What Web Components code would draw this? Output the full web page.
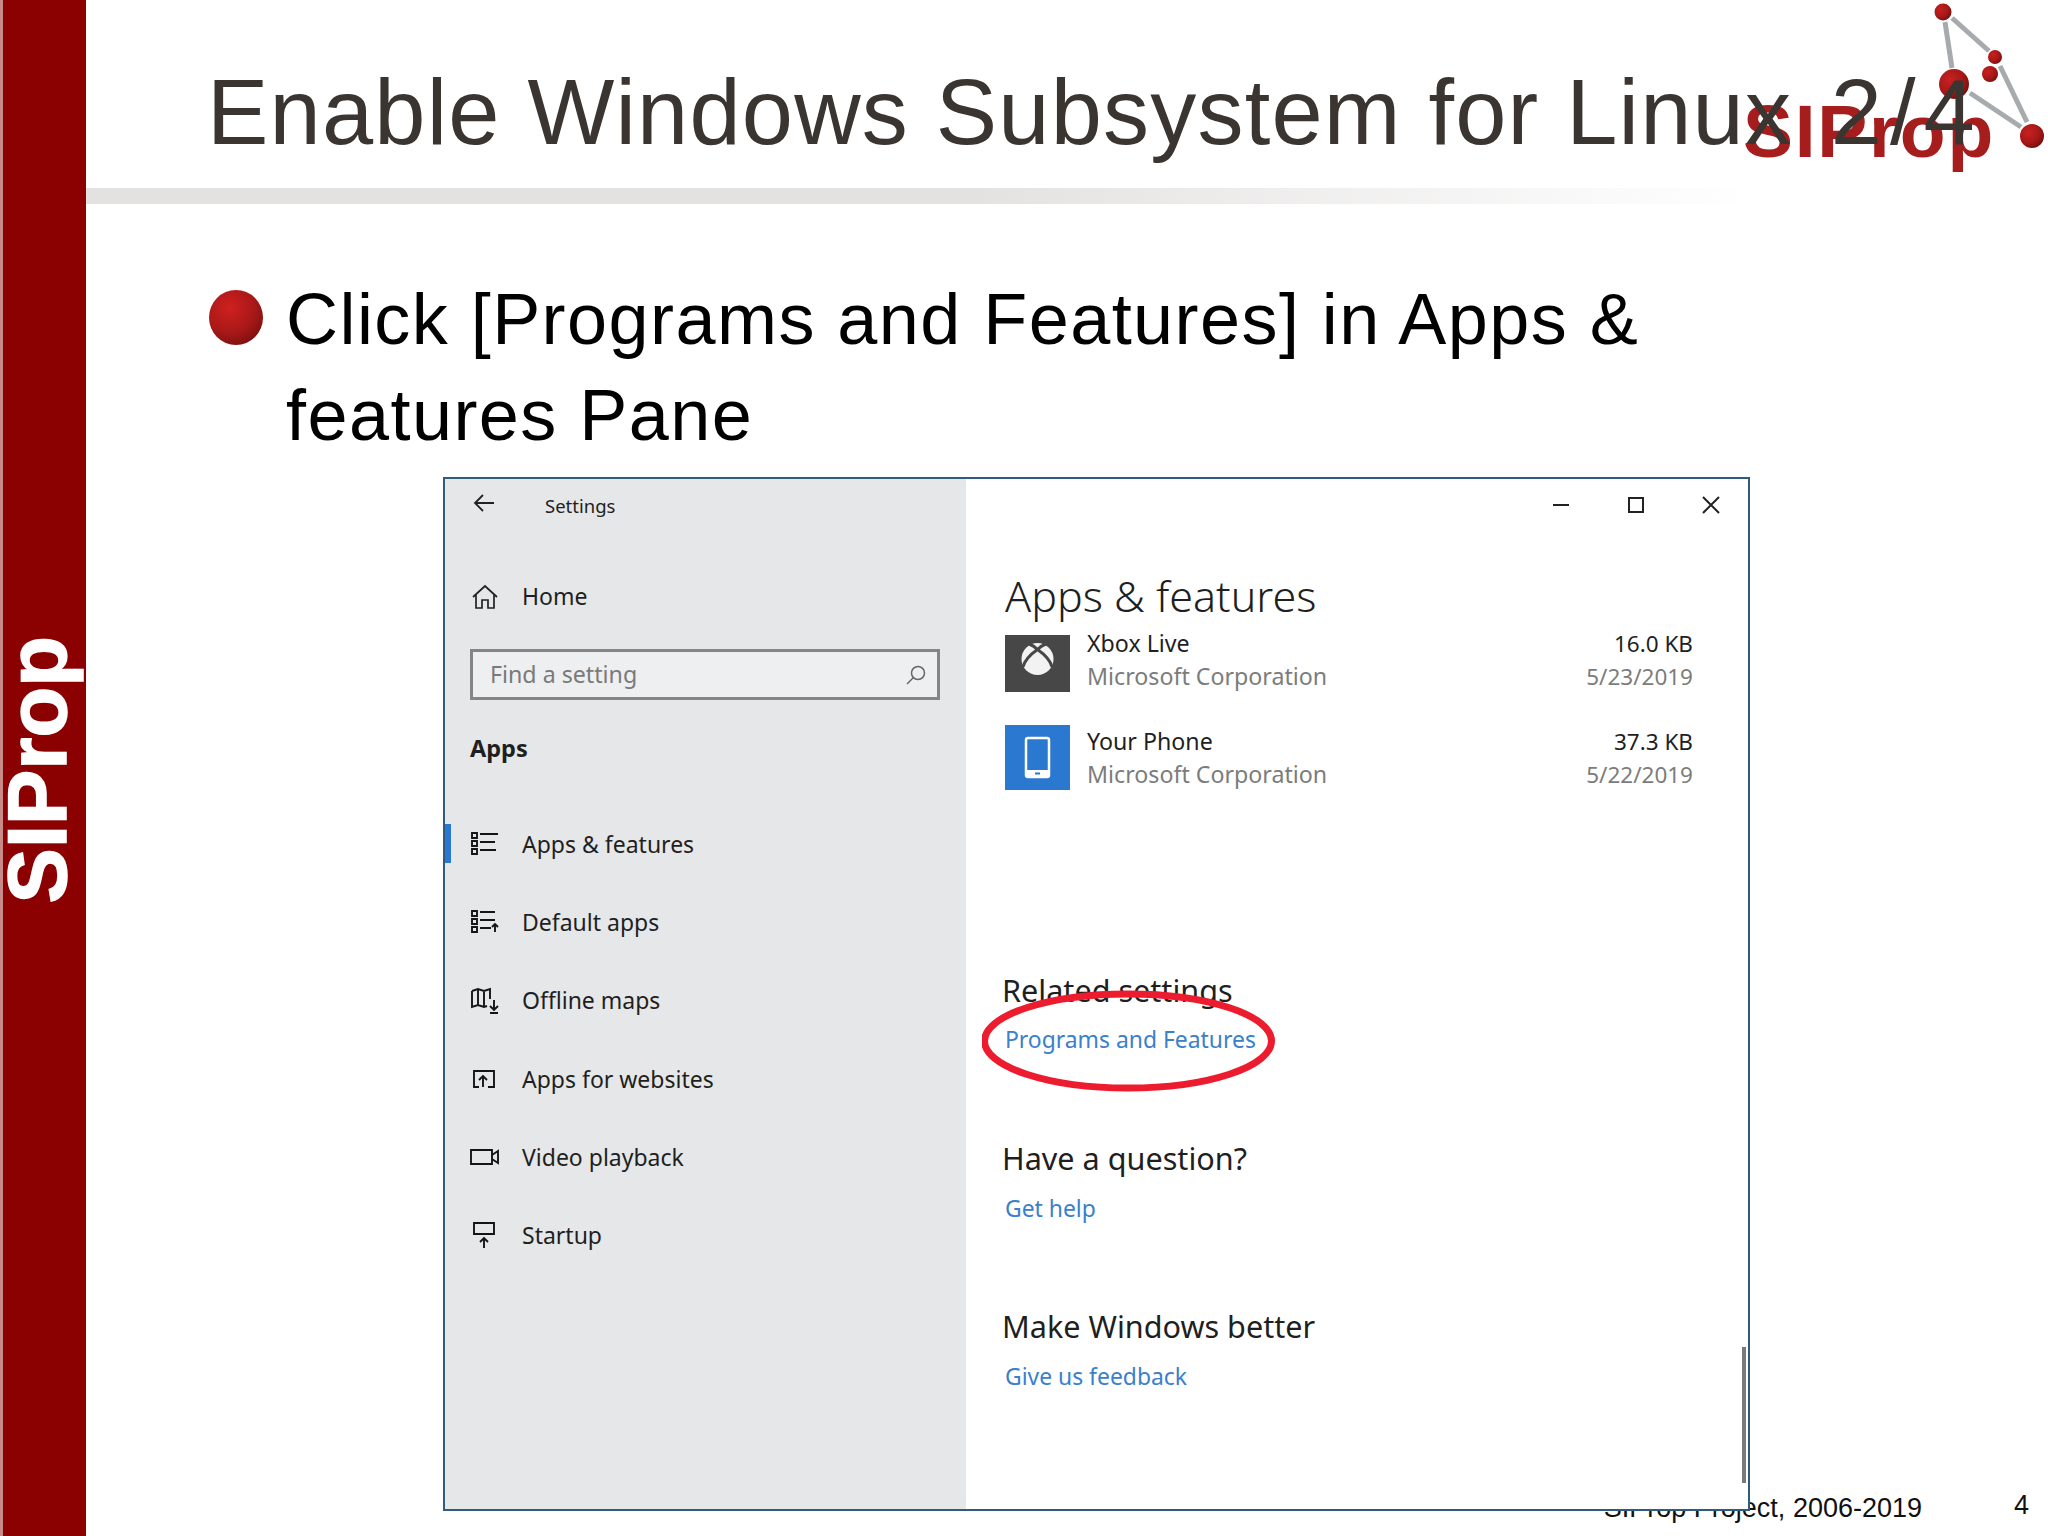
<!DOCTYPE html>
<html lang="en">
<head>
<meta charset="utf-8">
<title>Enable Windows Subsystem for Linux 2/4</title>
<style>
  html, body { margin: 0; padding: 0; background: #fff; }
</style>
</head>
<body>
<slide-page>
  <slide-title>Enable Windows Subsystem for Linux <span style="letter-spacing:8px;margin-left:12px">2/4</span></slide-title>
  <slide-bullet>Click [Programs and Features] in Apps &amp; features Pane</slide-bullet>
  <settings-window></settings-window>
  <slide-footer></slide-footer>
</slide-page>

<template id="slide-page-template">
  <style>
    :host { display: grid; grid-template-columns: 86px 1fr; width: 2048px; height: 1536px; overflow: hidden; background: #fff; position: relative; }
    .band { background: #8b0000; border-left: 3px solid #c98a8a; box-sizing: border-box; display: flex; flex-direction: column; justify-content: flex-end; align-items: flex-start; padding-bottom: 633px; }
    .band span { writing-mode: vertical-rl; transform: rotate(180deg); font: bold 83px/70px "Liberation Sans", sans-serif; -webkit-text-stroke: 1.5px #fff; color: #fff; white-space: nowrap; }
    main { display: flex; flex-direction: column; min-width: 0; }
    svg.logo { position: absolute; left: 1700px; top: 0; width: 348px; height: 200px; }
    svg.logo text { font: bold 75px "Liberation Sans", sans-serif; letter-spacing: 1.7px; fill: #a61d1d; }
  </style>
  <div class="band"><span>SIProp</span></div>
  <svg class="logo" viewBox="0 0 348 200">
    <defs>
      <radialGradient id="ball" cx="0.35" cy="0.35" r="0.75">
        <stop offset="0" stop-color="#c8201f"/><stop offset="0.6" stop-color="#a51818"/><stop offset="1" stop-color="#6e0d0d"/>
      </radialGradient>
    </defs>
    <g stroke="#a8abae" stroke-width="5" fill="none">
      <path d="M245 22 L252 68"/><path d="M252 18 L289 51"/><path d="M300 66 L327 122"/><path d="M270 93 L321 127"/>
    </g>
    <circle cx="243" cy="12" r="8.5" fill="url(#ball)"/>
    <circle cx="295" cy="57" r="7" fill="url(#ball)"/>
    <circle cx="290" cy="74" r="8" fill="url(#ball)"/>
    <circle cx="254" cy="84" r="15" fill="url(#ball)"/>
    <circle cx="332" cy="136" r="12" fill="url(#ball)"/>
    <text x="43" y="157">SIProp</text>
  </svg>
  <main><slot></slot></main>
</template>

<template id="slide-title-template">
  <style>
    :host { display: block; position: relative; }
    h1 { margin: 0; height: 188px; box-sizing: border-box; padding: 66px 0 0 121px; font: 400 92px/1 "Liberation Sans", sans-serif; letter-spacing: 1.2px; color: #3b3532; white-space: nowrap; }
    .rule { height: 16px; background: linear-gradient(90deg, #e4e2e1 0, #e4e2e1 45%, #fff 85%); }
  </style>
  <h1><slot></slot></h1>
  <div class="rule"></div>
</template>

<template id="slide-bullet-template">
  <style>
    :host { display: grid; grid-template-columns: 53px 1fr; column-gap: 24px; padding: 66.5px 0 0 123px; height: 273px; box-sizing: border-box; position: relative; }
    .ball { width: 54px; height: 55px; margin-top: 19.5px; border-radius: 50%; background: radial-gradient(circle at 38% 32%, #d0201f 0, #a81818 50%, #5f0b0b 100%); }
    p { margin: 0; width: 1420px; font: 400 72px/96px "Liberation Sans", sans-serif; letter-spacing: 1.45px; color: #000; }
  </style>
  <div class="ball"></div>
  <p><slot></slot></p>
</template>

<template id="nav-item-template">
  <style>
    :host { display: grid; grid-template-columns: 30px 1fr; column-gap: 23px; align-items: center; height: 78.2px; padding-left: 24px; font: 400 23px "Noto Sans", sans-serif; color: #1f1f1f; position: relative; white-space: nowrap; }
    :host([active])::before { content: ""; position: absolute; left: 0; top: 19px; width: 6px; height: 39px; background: #2b78d0; }
    ::slotted(svg) { width: 30px; height: 30px; fill: none; stroke: #151515; stroke-width: 1.9; }
  </style>
  <slot name="icon"></slot>
  <span><slot></slot></span>
</template>

<template id="app-row-template">
  <style>
    :host { display: grid; grid-template-columns: 65px 1fr auto; column-gap: 17px; align-items: center; height: 66px; font: 400 23.2px/33px "Noto Sans", sans-serif; color: #1f1f1f; margin-right: 55px; }
    .tile { width: 65px; height: 65px; align-self: end; display: flex; margin-bottom: 1.5px; }
    :host([short]) .tile { height: 57px; margin-bottom: 1px; }
    .sub { color: #7c7c7c; }
    .size { text-align: right; font-size: 22.5px; }
    ::slotted(svg) { width: 65px; height: 100%; display: block; }
  </style>
  <div class="tile"><slot name="tile"></slot></div>
  <div><slot name="name"></slot><div class="sub"><slot name="publisher"></slot></div></div>
  <div class="size"><slot name="size"></slot><div class="sub"><slot name="date"></slot></div></div>
</template>

<template id="link-block-template">
  <style>
    :host { display: block; }
    h3 { margin: 0 0 0 -3px; font: 400 30.6px/40px "Noto Sans", sans-serif; color: #1f1f1f; }
    a { display: block; font: 400 22.9px/36px "Noto Sans", sans-serif; color: #3a80cc; text-decoration: none; margin-top: var(--link-gap, 13px); }
  </style>
  <h3><slot name="head"></slot></h3>
  <a href="#"><slot name="link"></slot></a>
</template>

<template id="settings-window-template">
  <style>
    :host { display: grid; grid-template-columns: 521px 1fr; width: 1307px; height: 1034px; margin-left: 357px; box-sizing: border-box; border: 2px solid #305c7a; background: #fff; position: relative; z-index: 1; }
    .side { background: #e6e7e8; display: flex; flex-direction: column; font-family: "Noto Sans", sans-serif; color: #1f1f1f; }
    .top { height: 54px; display: grid; grid-template-columns: 72px 1fr; align-items: center; padding-left: 28px; font-size: 18.5px; }
    .top span { margin-top: -2px; }
    .top svg { width: 22px; height: 22px; margin-top: -6px; fill: none; stroke: #222; stroke-width: 1.8; }
    .home { margin-top: 24px; height: 78px; display: grid; grid-template-columns: 30px 1fr; column-gap: 21px; align-items: center; padding-left: 26px; font-size: 23px; }
    .home svg { width: 28px; height: 28px; fill: none; stroke: #222; stroke-width: 1.7; margin-top: 2px; }
    .search { margin: 14px 26px 0 25px; height: 51px; box-sizing: border-box; border: 3px solid #858585; background: #eeeff0; display: flex; align-items: center; justify-content: space-between; padding: 0 10px 0 17px; font-size: 23.2px; color: #7a7a7a; }
    .search span { margin-top: -2px; }
    .search svg { width: 22px; height: 22px; fill: none; stroke: #666; stroke-width: 1.5; }
    .group { margin: 28px 0 0 25px; height: 40px; line-height: 40px; font-weight: 700; font-size: 23.5px; }
    nav { margin-top: 37px; display: flex; flex-direction: column; }
    .pane { position: relative; padding-left: 39px; display: flex; flex-direction: column; font-family: "Noto Sans", sans-serif; }
    .controls { height: 54px; display: flex; justify-content: flex-end; align-items: center; gap: 55px; padding-right: 27px; }
    .controls svg { width: 20px; height: 20px; fill: none; stroke: #222; stroke-width: 2; margin-top: -2px; }
    h2 { margin: 33px 0 1px; height: 60px; font: 300 43px/60px "Noto Sans", sans-serif; color: #1f1f1f; white-space: nowrap; }
    .related { margin-top: 179px; --link-gap: 12.4px; }
    .question { margin-top: 79.6px; }
    .better { margin-top: 79px; }
    .scroll { position: absolute; left: 776px; top: 868px; width: 4px; height: 136px; background: #7a7a7a; }
    .ring { position: absolute; left: 16px; top: 511px; width: 296px; height: 102px; fill: none; stroke: #ec1c2e; stroke-width: 7; }
  </style>
  <div class="side">
    <div class="top">
      <svg viewBox="0 0 22 22"><path d="M21 11H2M10 3l-8 8 8 8"/></svg>
      <span>Settings</span>
    </div>
    <div class="home">
      <svg viewBox="0 0 28 28"><path d="M2 14L14 3l12 11M5 12v13h6v-8h6v8h6V12"/></svg>
      <span>Home</span>
    </div>
    <div class="search">
      <span>Find a setting</span>
      <svg viewBox="0 0 22 22"><circle cx="13" cy="9" r="6.5"/><path d="M8.5 13.5L2 20"/></svg>
    </div>
    <div class="group">Apps</div>
    <nav>
      <nav-item active><svg slot="icon" viewBox="0 0 30 30"><path d="M3 4h5v5H3zM3 12h5v5H3zM3 20h5v5H3zM11 5h18M11 13h15M11 21h16"/></svg>Apps &amp; features</nav-item>
      <nav-item><svg slot="icon" viewBox="0 0 30 30"><path d="M3 4h5v5H3zM3 12h5v5H3zM3 20h5v5H3zM11 5h15M11 13h15M11 21h11M29 20l-3-3-3 3M26 17v8"/></svg>Default apps</nav-item>
      <nav-item><svg slot="icon" viewBox="0 0 30 30"><path d="M3 6l6-2 6 2 6-2v10M3 6v16l6-2 6 2 3-1M9 4v16M15 6v16M25 15v9M21 21l4 4 4-4M21 28h8"/></svg>Offline maps</nav-item>
      <nav-item><svg slot="icon" viewBox="0 0 30 30"><path d="M10 23H5V7h20v16h-6M14 23v-10M10 16l4-4 4 4"/></svg>Apps for websites</nav-item>
      <nav-item><svg slot="icon" viewBox="0 0 30 30"><path d="M2 8h21v14H2zM23 13l6-4v12l-6-4"/></svg>Video playback</nav-item>
      <nav-item><svg slot="icon" viewBox="0 0 30 30"><path d="M5 3h20v11H5zM15 28v-10M11 22l4-4 4 4"/></svg>Startup</nav-item>
    </nav>
  </div>
  <div class="pane">
    <div class="controls">
      <svg viewBox="0 0 20 20"><path d="M2 10h16"/></svg>
      <svg viewBox="0 0 20 20"><path d="M3 3h14v14H3z"/></svg>
      <svg viewBox="0 0 20 20"><path d="M2 2l16 16M18 2L2 18"/></svg>
    </div>
    <h2>Apps &amp; features</h2>
    <app-row short>
      <svg slot="tile" viewBox="0 0 65 57"><rect width="65" height="57" fill="#474747"/><circle cx="32.500" cy="24" r="16" fill="#f2f2f2"/><path d="M24 9c3 1 6 3 8.500 5.500C35 12 38 10 41 9M18 32c2-8 8-13 14.500-17.500C39 19 45 24 47 32" fill="none" stroke="#474747" stroke-width="3"/></svg>
      <span slot="name">Xbox Live</span>
      <span slot="publisher">Microsoft Corporation</span>
      <span slot="size">16.0 KB</span>
      <span slot="date">5/23/2019</span>
    </app-row>
    <app-row style="margin-top:32px">
      <svg slot="tile" viewBox="0 0 65 65"><rect width="65" height="65" fill="#2b78d0"/><rect x="21" y="13" width="23" height="39" rx="2" fill="none" stroke="#fff" stroke-width="2.500"/><rect x="21" y="45" width="23" height="7" fill="#fff"/><rect x="30" y="47.500" width="5" height="2" fill="#2b78d0"/></svg>
      <span slot="name">Your Phone</span>
      <span slot="publisher">Microsoft Corporation</span>
      <span slot="size">37.3 KB</span>
      <span slot="date">5/22/2019</span>
    </app-row>
    <link-block class="related"><span slot="head">Related settings</span><span slot="link">Programs and Features</span></link-block>
    <link-block class="question"><span slot="head">Have a question?</span><span slot="link">Get help</span></link-block>
    <link-block class="better"><span slot="head">Make Windows better</span><span slot="link">Give us feedback</span></link-block>
    <div class="scroll"></div>
    <svg class="ring" viewBox="0 0 296 102"><ellipse cx="146" cy="51" rx="143.500" ry="47"/></svg>
  </div>
</template>

<template id="slide-footer-template">
  <style>
    :host { display: flex; justify-content: flex-end; align-items: center; height: 36px; margin-top: -21px; font: 400 27px "Liberation Sans", sans-serif; color: #111; white-space: nowrap; }
    .num { width: 126px; text-align: right; padding-right: 19px; box-sizing: border-box; margin-top: -6px; }
  </style>
  <span>SIProp Project, 2006-2019</span>
  <span class="num">4</span>
</template>

<script>
  (function () {
    // every element just clones its own template into an open shadow root
    function register(name) {
      const template = document.getElementById(name + "-template");
      customElements.define(
        name,
        class extends HTMLElement {
          constructor() {
            super();
            this.attachShadow({ mode: "open" });
            this.shadowRoot.appendChild(template.content.cloneNode(true));
          }
        }
      );
    }
    [
      "nav-item",
      "app-row",
      "link-block",
      "settings-window",
      "slide-title",
      "slide-bullet",
      "slide-footer",
      "slide-page",
    ].forEach(register);
  })();
</script>
</body>
</html>
